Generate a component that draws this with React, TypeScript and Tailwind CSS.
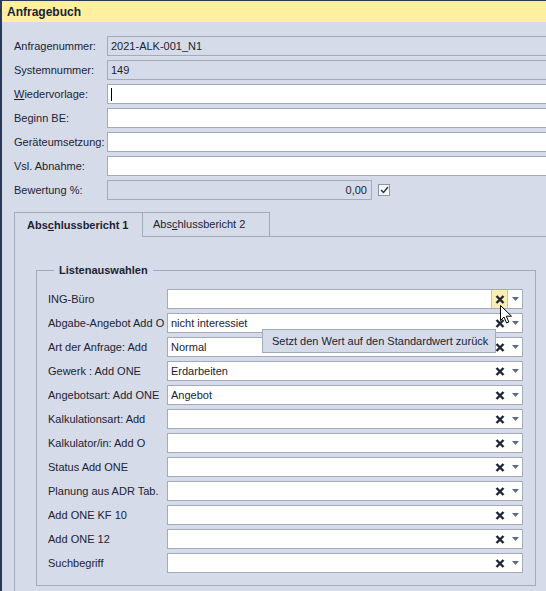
import React from 'react';

const font = { fontFamily: '"Liberation Sans", Arial, sans-serif' };

const topFields: { label: string; value?: string; kind: 'ro' | 'edit' }[] = [
  { label: 'Anfragenummer:', value: '2021-ALK-001_N1', kind: 'ro' },
  { label: 'Systemnummer:', value: '149', kind: 'ro' },
  { label: 'Wiedervorlage:', kind: 'edit' },
  { label: 'Beginn BE:', kind: 'edit' },
  { label: 'Geräteumsetzung:', kind: 'edit' },
  { label: 'Vsl. Abnahme:', kind: 'edit' },
];

const combos: { label: string; value?: string }[] = [
  { label: 'ING-Büro' },
  { label: 'Abgabe-Angebot Add O', value: 'nicht interessiet' },
  { label: 'Art der Anfrage: Add', value: 'Normal' },
  { label: 'Gewerk : Add ONE', value: 'Erdarbeiten' },
  { label: 'Angebotsart: Add ONE', value: 'Angebot' },
  { label: 'Kalkulationsart: Add' },
  { label: 'Kalkulator/in: Add O' },
  { label: 'Status Add ONE' },
  { label: 'Planung aus ADR Tab.' },
  { label: 'Add ONE KF 10' },
  { label: 'Add ONE 12' },
  { label: 'Suchbegriff' },
];

const ClearIcon = () => (
  <svg width="10" height="9" viewBox="0 0 10 9">
    <path d="M1.5 1 L8.5 8 M8.5 1 L1.5 8" stroke="#1e2536" strokeWidth="2.4" strokeLinecap="butt" />
  </svg>
);

const ArrowIcon = () => (
  <svg width="7" height="4" viewBox="0 0 7 4">
    <path d="M0 0 H7 L3.5 4 Z" fill="#5b6b8c" />
  </svg>
);

const Combo = ({ value, hot }: { value?: string; hot?: boolean }) => (
  <div className="flex h-[20px] w-[356px] shrink-0 items-stretch border border-[#a3abba] bg-white">
    <div className="flex flex-1 items-center overflow-hidden whitespace-nowrap pl-[3px] text-[#1b2333]">{value}</div>
    <div
      className={`flex w-[17px] items-center justify-center ${
        hot ? 'border-x border-[#e4c266] bg-[#fcedb0]' : ''
      }`}
    >
      <ClearIcon />
    </div>
    <div className="flex w-[14px] items-center justify-center">
      <ArrowIcon />
    </div>
  </div>
);

export default function App() {
  return (
    <div
      className="relative h-[591px] w-[546px] overflow-hidden border-l-2 border-t border-[#293a56] bg-[#d6dbe9] text-[11px] text-[#1b2333]"
      style={font}
    >
      <div className="flex h-[21px] items-center bg-[#ffef9f] pl-[5px] text-[12px] font-bold text-[#15233b]">
        Anfragebuch
      </div>

      {/* Kopfdaten */}
      <div className="flex flex-col gap-[4px] pl-[12px] pt-[14px]">
        {topFields.map((f) => (
          <div key={f.label} className="flex h-[20px] items-center">
            <div className="w-[93px] shrink-0 whitespace-nowrap">
              {f.label === 'Wiedervorlage:' ? (
                <>
                  <span className="underline">W</span>iedervorlage:
                </>
              ) : (
                f.label
              )}
            </div>
            <div
              className={`flex h-[20px] w-[460px] shrink-0 items-center border border-[#a3abba] pl-[3px] ${
                f.kind === 'ro' ? 'bg-[#d6dbe9]' : 'bg-white'
              }`}
            >
              {f.value}
              {f.label === 'Wiedervorlage:' && <div className="h-[13px] w-px bg-black" />}
            </div>
          </div>
        ))}
        <div className="flex h-[20px] items-center">
          <div className="w-[93px] shrink-0 whitespace-nowrap">Bewertung %:</div>
          <div className="flex h-[20px] w-[265px] shrink-0 items-center justify-end border border-[#a3abba] pr-[4px]">0,00</div>
          <div className="ml-[6px] flex h-[12px] w-[12px] items-center justify-center border border-[#8b95a8] bg-[#f4f6fa]">
            <svg width="9" height="8" viewBox="0 0 9 8">
              <path d="M1 4 L3.5 6.5 L8 1" stroke="#2a3550" strokeWidth="1.5" fill="none" />
            </svg>
          </div>
        </div>
      </div>

      {/* Tabs */}
      <div className="ml-[12px] mt-[12px]">
        <div className="flex h-[25px] items-end">
          <div className="flex h-[25px] w-[129px] shrink-0 items-center border-l border-r border-t border-[#a3abba] pl-[12px] font-bold">
            Abs<span className="underline">c</span>hlussbericht 1
          </div>
          <div className="flex h-[25px] w-[127px] shrink-0 items-center border-b border-r border-t border-[#a3abba] pl-[10px]">
            Abs<span className="underline">c</span>hlussbericht 2
          </div>
          <div className="h-[25px] flex-1 border-b border-[#a3abba]" />
        </div>
        <div className="h-[400px] border-l border-[#a3abba] pl-[21px] pt-[25px]">
          <fieldset className="w-[500px] border border-[#a3abba] pb-[12px] pl-[11px] pt-[11px]">
            <legend className="ml-[6px] px-[5px] font-bold leading-[16px]">Listenauswahlen</legend>
            <div className="flex flex-col gap-[4px]">
              {combos.map((c, i) => (
                <div key={c.label} className="flex h-[20px] items-center">
                  <div className="w-[119px] shrink-0 overflow-hidden whitespace-nowrap">{c.label}</div>
                  <Combo value={c.value} hot={i === 0} />
                </div>
              ))}
            </div>
          </fieldset>
        </div>
      </div>

      {/* Tooltip */}
      <div className="absolute left-[260px] top-[328px] flex h-[24px] w-[234px] items-center border border-[#a3abba] bg-[#d6dbe9] pl-[9px] text-[#1b2333]">
        Setzt den Wert auf den Standardwert zurück
      </div>

      {/* Mauszeiger */}
      <svg className="absolute left-[498px] top-[304px]" width="13" height="20" viewBox="0 0 13 20">
        <path
          d="M0.5 0.5 L0.5 15.5 L4 12 L6.5 18 L8.8 17 L6.3 11.2 L11.5 11.2 Z"
          fill="white"
          stroke="black"
          strokeWidth="1"
          strokeLinejoin="round"
        />
      </svg>
    </div>
  );
}
